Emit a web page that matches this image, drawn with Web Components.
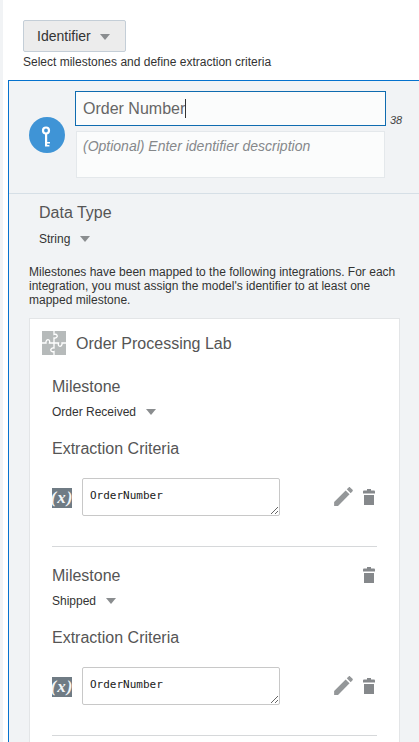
<!DOCTYPE html>
<html lang="en">
<head>
<meta charset="utf-8">
<title>Identifier</title>
<style>
    html, body { margin: 0; height: 742px; overflow: hidden; background: #fff; }
    body { font-family: "Liberation Sans", Arial, sans-serif; color: #333; }
</style>
</head>
<body>
<identifier-page>
    <identifier-dropdown slot="top">Identifier</identifier-dropdown>
    <identifier-panel>
        <integration-card title="Order Processing Lab">
            <milestone-block name="Order Received"></milestone-block>
            <milestone-block name="Shipped" removable></milestone-block>
        </integration-card>
    </identifier-panel>
</identifier-page>

<script>
// small shared svg snippets
const TRASH = `<svg width="12" height="16" viewBox="0 0 12 16" fill="#85888b">
    <path d="M4 0h4v1.500h2.800c.7 0 1.200.5 1.200 1.200V4.500H0V2.700c0-.7.5-1.200 1.200-1.200H4z"/>
    <rect x="1" y="6" width="10" height="10"/></svg>`;
const PENCIL = `<svg width="25" height="25" viewBox="0 0 24 24" fill="#949799">
    <path d="M3 17.250V21h3.750L17.810 9.940l-3.750-3.750L3 17.250z"/>
    <path d="M20.710 7.040c.39-.39.39-1.020 0-1.410l-2.340-2.340c-.39-.39-1.020-.39-1.410 0l-1.830 1.830 3.750 3.750 1.830-1.830z"/></svg>`;

customElements.define('identifier-page',
class extends HTMLElement {
    constructor() {
        super();
        this.attachShadow({mode: 'open'}).innerHTML = `
        <style>
            :host { display: block; height: 742px; overflow: hidden; padding-left: 3px; background: #f1f3f5; }
            .sheet { background: #fff; height: 742px; padding: 20px 0 0 5px; box-sizing: border-box; }
            .top { padding-left: 15px; }
            .hint { font-size: 12px; line-height: 14px; margin: 3px 0 11px; color: #333; }
        </style>
        <div class="sheet">
            <div class="top">
                <slot name="top"></slot>
                <div class="hint">Select milestones and define extraction criteria</div>
            </div>
            <slot></slot>
        </div>
        `;
    }
});

customElements.define('identifier-dropdown',
class extends HTMLElement {
    constructor() {
        super();
        this.attachShadow({mode: 'open'}).innerHTML = `
        <style>
            :host {
                display: flex; align-items: center; box-sizing: border-box;
                width: 103px; height: 32px; padding-left: 13px;
                background: #ececec; border: 1px solid #c4ced7; border-radius: 2px;
                font-size: 14px; color: #333;
            }
            i { width: 0; height: 0; margin: 2px 0 0 9px; border: 5px solid transparent; border-top: 6px solid #8a8d8f; border-bottom: 0; }
        </style>
        <slot></slot><i></i>
        `;
    }
});

customElements.define('select-link',
class extends HTMLElement {
    constructor() {
        super();
        this.attachShadow({mode: 'open'}).innerHTML = `
        <style>
            :host { display: flex; align-items: center; font-size: 12px; line-height: 14px; color: #333; }
            i { width: 0; height: 0; margin-left: 10px; border: 5px solid transparent; border-top: 6px solid #8a8d8f; border-bottom: 0; }
        </style>
        <slot></slot><i></i>
        `;
    }
});

customElements.define('identifier-panel',
class extends HTMLElement {
    constructor() {
        super();
        this.attachShadow({mode: 'open'}).innerHTML = `
        <style>
            :host { display: block; width: 460px; box-sizing: border-box; height: 700px; background: #f1f3f5; border: 1px solid #0572ce; }
            .head { display: flex; align-items: center; height: 113px; box-sizing: border-box; padding: 10px 0 15px 20px; border-bottom: 1px solid #d6dfe6; }
            .key { width: 36px; height: 36px; margin-right: 10px; flex: none; display: block; }
            .fields { width: 311px; flex: none; }
            .name {
                box-sizing: border-box; height: 35px; padding: 0 7px; display: flex; align-items: center;
                background: #fbfcfc; border: 1px solid #0f6cb0;
                font-size: 16px; color: #666;
            }
            .name b { width: 1px; height: 19px; background: #333; }
            .desc {
                box-sizing: border-box; height: 47px; margin: 5px 1px 0; padding: 5px 6px;
                background: #fbfcfc; border: 1px solid #e4e8eb;
                font-size: 14px; line-height: 18px; font-style: italic; color: #85888b;
            }
            .count { align-self: flex-start; margin: 23px 0 0 4px; font-size: 11px; line-height: 13px; font-style: italic; color: #444; }
            .body { padding: 8px 0 0 20px; width: 371px; }
            h3 { margin: 0 0 10px 10px; height: 20px; font-size: 16px; line-height: 22px; font-weight: normal; color: #555; }
            select-link { margin-left: 10px; }
            p { margin: 19px 0 11px; font-size: 12px; line-height: 14px; color: #333; width: 371px; }
        </style>
        <div class="head">
            <svg class="key" viewBox="0 0 36 36">
                <circle cx="18" cy="18" r="18" fill="#3f94d6"/>
                <circle cx="17" cy="13.500" r="3" fill="none" stroke="#fff" stroke-width="2.200"/>
                <path d="M16 16h2.200v13.500H16z M18.200 25h2.800v1.600h-2.800z M18.200 27.900h2.200v1.600h-2.200z" fill="#fff"/>
            </svg>
            <div class="fields">
                <div class="name"><span>Order Number</span><b></b></div>
                <div class="desc">(Optional) Enter identifier description</div>
            </div>
            <div class="count">38</div>
        </div>
        <div class="body">
            <h3>Data Type</h3>
            <select-link>String</select-link>
            <p>Milestones have been mapped to the following integrations. For each integration, you must assign the model's identifier to at least one mapped milestone.</p>
            <slot></slot>
        </div>
        `;
    }
});

customElements.define('integration-card',
class extends HTMLElement {
    constructor() {
        super();
        this.attachShadow({mode: 'open'}).innerHTML = `
        <style>
            :host { display: block; width: 371px; box-sizing: border-box; height: 500px; background: #fff; border: 1px solid #e3e5e7; padding: 12px 22px 0 12px; }
            .title { display: flex; align-items: center; gap: 10px; font-size: 16px; color: #555; height: 24px; }
            .title svg { display: block; flex: none; }
            .title .name { padding-top: 2px; }
            .list { padding: 3px 0 0 10px; }
        </style>
        <div class="title">
            <svg width="24" height="24" viewBox="0 0 24 24">
                <rect width="24" height="24" fill="#b6baba"/>
                <path d="M12 0v3.500c3-1 4 1.500 2.700 2.800c-1 1-2.700.7-2.700.7V12H7.500c1-3-1.500-4-2.800-2.700c-1 1-.7 2.700-.7 2.700H0
                         M12 24v-3.500c-3 1-4-1.500-2.700-2.800c1-1 2.700-.7 2.700-.7V12h4.500c-1 3 1.500 4 2.800 2.700c1-1 .7-2.700.7-2.700H24"
                      fill="none" stroke="#fff" stroke-width="1.300"/>
            </svg>
            <span class="name"></span>
        </div>
        <div class="list"><slot></slot></div>
        `;
        this.shadowRoot.querySelector('.name').textContent = this.getAttribute('title');
    }
});

customElements.define('milestone-block',
class extends HTMLElement {
    constructor() {
        super();
        this.attachShadow({mode: 'open'}).innerHTML = `
        <style>
            :host { display: block; padding-top: 18px; border-bottom: 1px solid #d6d8da; }
            h3 { margin: 0; height: 20px; font-size: 16px; line-height: 22px; font-weight: normal; color: #555; }
            .line { display: flex; justify-content: space-between; align-items: center; height: 20px; }
            .line svg { display: block; margin-right: 2px; }
            select-link { margin: 9px 0 19px; }
            .row { display: flex; align-items: center; margin: 20px 0 30px; }
            .fx {
                width: 20px; height: 20px; flex: none; margin: 2px 10px 0 0; background: #6f7b84;
                display: flex; align-items: center; justify-content: center; overflow: hidden;
                font: italic bold 17px/20px "Liberation Serif", serif; letter-spacing: 1px; color: #f4f6f7;
            }
            textarea {
                width: 198px; height: 38px; box-sizing: border-box; margin: 0; padding: 10px 7px 0;
                border: 1px solid #c8c8c8; border-radius: 2px; background: #fff; outline: 0;
                font: 11px/14px "DejaVu Sans Mono", monospace; color: #222;
            }
            .tools { display: flex; align-items: center; margin-left: auto; padding-right: 2px; }
            .tools svg { display: block; }
            .tools svg:first-child { margin-bottom: 1px; }
            .tools svg + svg { margin-left: 7px; }
        </style>
        <div class="line"><h3>Milestone</h3><span class="del"></span></div>
        <select-link class="pick"></select-link>
        <h3>Extraction Criteria</h3>
        <div class="row">
            <span class="fx">(x)</span>
            <textarea spellcheck="false">OrderNumber</textarea>
            <div class="tools">${PENCIL}${TRASH}</div>
        </div>
        `;
        this.shadowRoot.querySelector('.pick').textContent = this.getAttribute('name');
        if (this.hasAttribute('removable')) {
            this.shadowRoot.querySelector('.del').innerHTML = TRASH;
        }
    }
});
</script>
</body>
</html>
